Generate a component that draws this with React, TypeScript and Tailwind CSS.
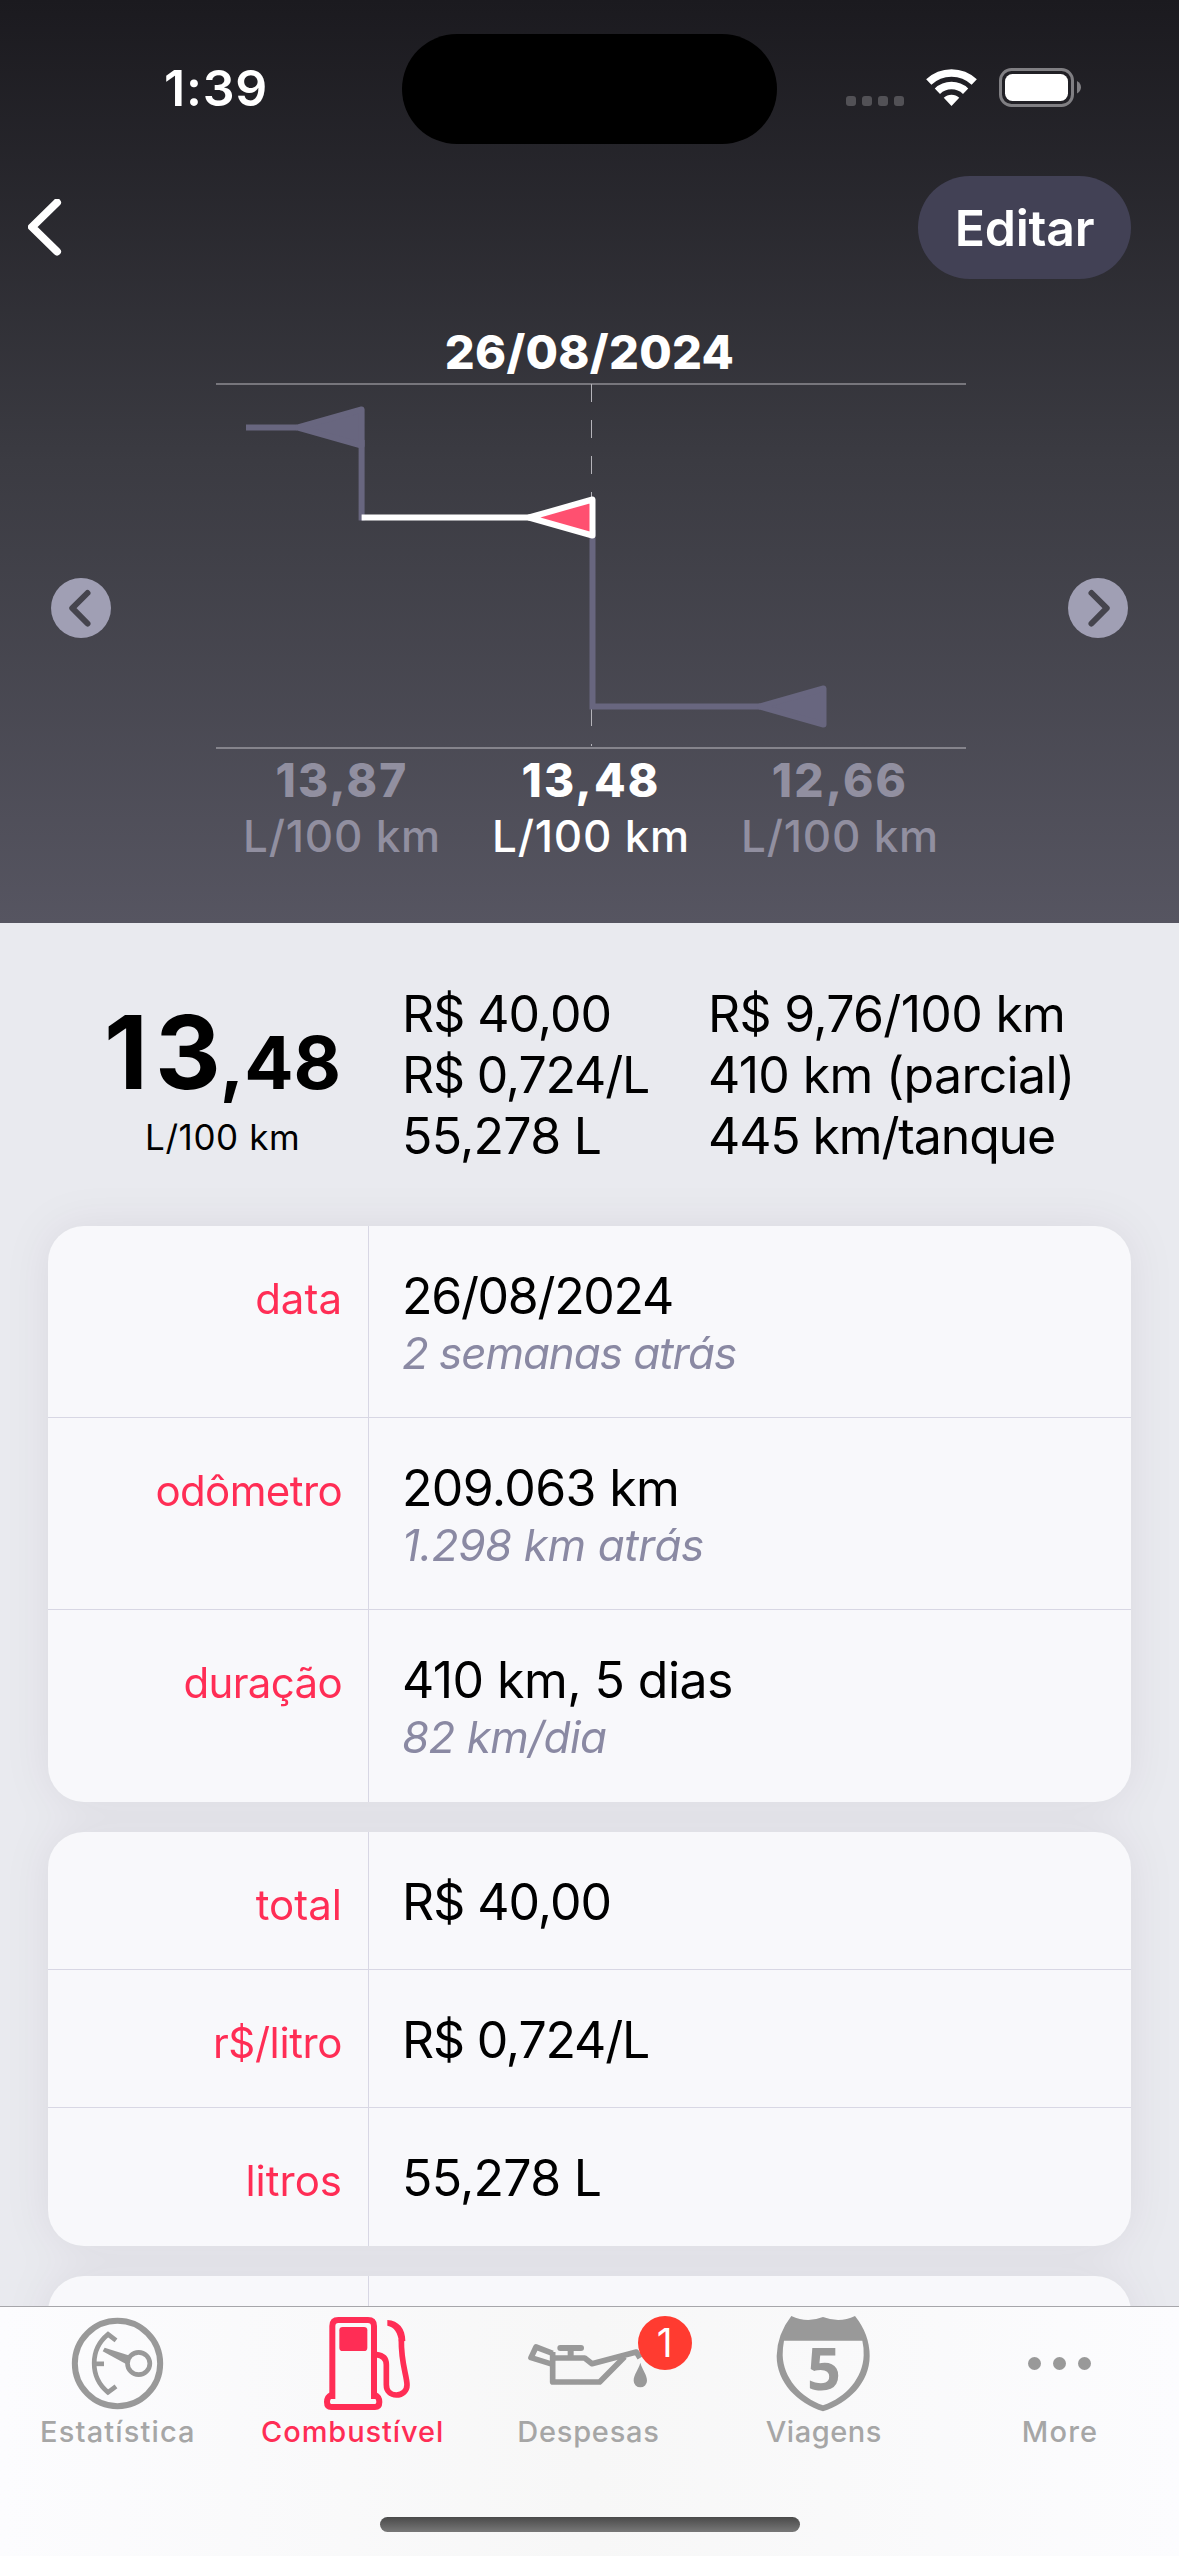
type Row = {
  label: string;
  labelClass?: string;
  value: string;
  valueClass: string;
  note?: string;
  noteClass?: string;
};

const readings = [
  { value: '13,87', tone: 'text-[#918fa0]' },
  { value: '13,48', tone: 'text-white' },
  { value: '12,66', tone: 'text-[#918fa0]' }
];

const tripRows: Row[] = [
  {
    label: 'data',
    value: '26/08/2024',
    valueClass: 'tracking-[-1.31px]',
    note: '2 semanas atrás',
    noteClass: 'tracking-[-1.07px]'
  },
  {
    label: 'odômetro',
    labelClass: 'tracking-[-0.6px]',
    value: '209.063 km',
    valueClass: 'tracking-[-0.64px]',
    note: '1.298 km atrás',
    noteClass: 'tracking-[-0.4px]'
  },
  {
    label: 'duração',
    labelClass: 'tracking-[-0.65px]',
    value: '410 km, 5 dias',
    valueClass: 'tracking-[-0.56px]',
    note: '82 km/dia',
    noteClass: 'tracking-[-0.57px]'
  }
];

const costRows: Row[] = [
  { label: 'total', value: 'R$ 40,00', valueClass: 'tracking-[-1.01px]' },
  { label: 'r$/litro', labelClass: 'tracking-[-0.4px]', value: 'R$ 0,724/L', valueClass: 'tracking-[-1.18px]' },
  { label: 'litros', value: '55,278 L', valueClass: 'tracking-[-0.75px]' }
];

function StatusBar() {
  return (
    <div className="flex h-[176px] shrink-0">
      <div className="w-[402px] pt-[63px] pl-[164px] text-[50px] leading-[50px] font-semibold tracking-[0.8px]">1:39</div>
      <div className="mt-[34px] h-[110px] w-[375px] rounded-full bg-black" />
      <div className="flex h-[39px] items-end gap-[22px] mt-[68px] pl-[69px]">
        <div className="mb-px flex gap-1.5">
          {[0, 1, 2, 3].map((i) => (
            <span key={i} className="size-2.5 rounded-[3px] bg-[#525156]" />
          ))}
        </div>
        <svg className="mb-px h-[37px] w-[51px]" viewBox="0 0 153 112" fill="none" stroke="#fff" strokeWidth="23">
          <path d="M7.700 39.500A100 100 0 0 1 145.300 39.500" />
          <path d="M33.800 67A62 62 0 0 1 119.200 67" />
          <path d="M76.500 112L53 87.300A34 34 0 0 1 100 87.300Z" fill="#fff" stroke="none" />
        </svg>
        <svg className="h-[39px] w-[82px]" viewBox="0 0 82 39">
          <rect x="1.500" y="1.500" width="72" height="36" rx="11" fill="none" stroke="#807f83" strokeWidth="3" />
          <rect x="6" y="6" width="63" height="27" rx="7.500" fill="#fff" />
          <path d="M78 13Q82 15.500 82 19.200T78 25.500Z" fill="#807f83" />
        </svg>
      </div>
    </div>
  );
}

function CircleArrow({ flip = false }: { flip?: boolean }) {
  return (
    <svg className={flip ? 'mt-[83px] size-[60px] -scale-x-100' : 'mt-[83px] size-[60px]'} viewBox="0 0 60 60">
      <circle cx="30" cy="30" r="30" fill="#a09fb4" />
      <path d="M36.500 15L21.300 30.200L36.500 45.500" fill="none" stroke="#45444d" strokeWidth="6" strokeLinecap="round" strokeLinejoin="round" />
    </svg>
  );
}

function ConsumptionChart() {
  return (
    <svg className="ml-[3px] h-[367px] w-[750px]" viewBox="216 383 750 367" fill="none">
      <path d="M216 384H966" stroke="#77767c" strokeWidth="2" />
      <path d="M216 748H966" stroke="#85848c" strokeWidth="2" />
      <path d="M591.500 384V746" stroke="#b5b4ba" strokeWidth="1" strokeDasharray="18 18" />
      <g stroke="#68667f" strokeWidth="6" strokeLinejoin="round">
        <path d="M246 427.500H297M361.600 440V520.500M592.500 530V706.500H760" strokeLinejoin="miter" />
        <path d="M298 427.500L361.600 409.500V445.500Z" fill="#68667f" />
        <path d="M760 706.500L823.500 688.500V724.500Z" fill="#68667f" />
      </g>
      <g stroke="#fff" strokeWidth="6" strokeLinejoin="round">
        <path d="M361.600 517.500H530" />
        <path d="M529 517.500L592.500 499.500V535.500Z" fill="#ff5070" />
      </g>
    </svg>
  );
}

function Header() {
  return (
    <header className="flex h-[923px] shrink-0 flex-col bg-linear-to-b from-[#1b1a1f] via-[#3b3b42] via-50% to-[#565561] text-white">
      <StatusBar />
      <div className="flex h-[103px] items-center justify-between pr-12 pl-7">
        <svg className="h-[58px] w-[34px]" viewBox="0 0 34 58" fill="none" stroke="#fff" strokeWidth="8" strokeLinecap="round" strokeLinejoin="round">
          <path d="M29 3.500L4 28L29 52.500" />
        </svg>
        <button className="h-[103px] w-[213px] rounded-full bg-[#424155] pt-0.5 text-[50px] font-semibold tracking-[-0.23px]">Editar</button>
      </div>
      <h1 className="mt-12 text-center text-[47px] leading-[50px] font-extrabold tracking-[0.3px]">26/08/2024</h1>
      <div className="mt-1.5 flex items-center justify-between px-[51px]">
        <CircleArrow />
        <ConsumptionChart />
        <CircleArrow flip />
      </div>
      <div className="mt-[5px] flex justify-center pl-[3px]">
        {readings.map((r) => (
          <div key={r.value} className={`w-[249px] text-center ${r.tone}`}>
            <div className="text-[46px] leading-[50px] font-extrabold tracking-[2.2px]">{r.value}</div>
            <div className="mt-[3px] text-[44px] leading-[56px] font-medium tracking-[0.78px]">L/100 km</div>
          </div>
        ))}
      </div>
    </header>
  );
}

function Summary() {
  return (
    <section className="flex h-[303px]">
      <div className="w-[402px] pt-[74px] pl-[104px]">
        <div className="flex h-[110px] items-baseline font-bold">
          <span className="text-[102px] leading-[110px] tracking-[7px]">13</span>
          <span className="-ml-2 text-[73px] leading-none">,48</span>
        </div>
        <div className="mt-2.5 pl-[41px] text-[35px] leading-10 tracking-[0.59px]">L/100 km</div>
      </div>
      <div className="w-[306px] pt-[61px] text-[50px] leading-[61px]">
        <p className="tracking-[-1.01px]">R$ 40,00</p>
        <p className="tracking-[-1.18px]">R$ 0,724/L</p>
        <p className="tracking-[-0.75px]">55,278 L</p>
      </div>
      <div className="pt-[61px] text-[50px] leading-[61px]">
        <p className="tracking-[-0.7px]">R$ 9,76/100 km</p>
        <p className="tracking-[-0.66px]">410 km (parcial)</p>
        <p className="tracking-[-1.14px]">445 km/tanque</p>
      </div>
    </section>
  );
}

function Card({ rows }: { rows: Row[] }) {
  return (
    <div className="overflow-hidden rounded-[36px] bg-[#f8f8fb]">
      {rows.map((row) => (
        <div
          key={row.label}
          className={`flex border-b border-[#d8d7e4] last:border-b-0 ${row.note ? 'h-48' : 'h-[138px]'}`}
        >
          <div className={`w-[321px] border-r border-[#d8d7e4] pt-[43px] pr-[26px] text-right text-[42px] leading-[60px] text-[#ff2d55] ${row.labelClass ?? ''}`}>
            {row.label}
          </div>
          <div className="pt-10 pl-[33px]">
            <div className={`text-[50px] leading-[60px] ${row.valueClass}`}>{row.value}</div>
            {row.note && (
              <div className={`mt-0.5 text-[44px] leading-[50px] text-[#8a89a3] italic ${row.noteClass ?? ''}`}>{row.note}</div>
            )}
          </div>
        </div>
      ))}
    </div>
  );
}

function GaugeIcon() {
  return (
    <svg className="size-24" viewBox="0 0 288 288" fill="none" stroke="#999" strokeWidth="14">
      <circle cx="142.500" cy="142.500" r="128" strokeWidth="18" />
      <path d="M138 73L114 55A112 112 0 0 0 114 229L138 211" />
      <path d="M68 143.500H102" />
      <circle cx="206" cy="142.500" r="33.500" />
      <path d="M104 95L180 119L168 144L98 106Z" fill="#999" stroke="none" />
    </svg>
  );
}

function PumpIcon() {
  return (
    <svg className="size-24 overflow-visible" viewBox="0 0 288 288" fill="none" stroke="#ff2d55" strokeWidth="18">
      <g transform="translate(-1 0)">
        <path d="M80 249V30Q80 12 98 12H187Q205 12 205 30V249" />
        <path d="M78 236Q64 242 64 258Q64 273 77 273H208Q221 273 221 258Q221 242 207 236" />
        <rect x="101" y="33" width="84" height="72" rx="10" fill="#ff2d55" stroke="none" />
        <path d="M212 116C232 118 242 128 242 146V206C242 226 255 237 272 237C291 237 304 224 304 207C304 178 286 145 287 70" strokeWidth="17" />
        <path d="M245 12C279 14 299 38 299 75L280 77C277 52 266 32 245 29Z" fill="#ff2d55" stroke="none" />
      </g>
    </svg>
  );
}

function OilIcon() {
  return (
    <svg className="size-24 overflow-visible" viewBox="0 0 288 288" fill="none" stroke="#999" strokeWidth="17" strokeLinejoin="round">
      <path d="M35 112L-15 93L-30 125L35 145" />
      <path d="M35 126V198H176L251 122" />
      <path d="M35 108V126H131L153 143L286 108L297 126" />
      <path d="M58 96H120" strokeWidth="18" strokeLinecap="round" />
      <path d="M89 96V126" strokeWidth="18" />
      <path d="M298 140C304 162 318 176 318 194A20 20 0 0 1 278 194C278 176 292 162 298 140Z" fill="#999" stroke="none" />
    </svg>
  );
}

function ShieldIcon() {
  return (
    <svg className="size-24 overflow-visible" viewBox="0 0 288 288">
      <path
        fill="#999"
        fillRule="evenodd"
        d="M43 0Q90 22 138 3Q188 22 234 0Q278 55 278 120C278 200 215 262 138 286C62 262 -1 200 -1 120Q0 55 43 0ZM21 74Q17 95 17 118C19 185 70 245 138 268C208 245 258 185 260 118Q261 95 256 74Z"
      />
      <text x="141" y="222" textAnchor="middle" fill="#999" fontSize="178" className="font-['Open_Sans'] font-bold">5</text>
    </svg>
  );
}

function MoreIcon() {
  return (
    <svg className="size-24" viewBox="0 0 96 96" fill="#999">
      <circle cx="21.500" cy="47.500" r="6.500" />
      <circle cx="46.500" cy="47.500" r="6.500" />
      <circle cx="71.500" cy="47.500" r="6.500" />
    </svg>
  );
}

const tabs = [
  { label: 'Estatística', tracking: 'tracking-[1.14px]', icon: <GaugeIcon /> },
  { label: 'Combustível', tracking: 'tracking-[0.91px] mr-0.5', icon: <PumpIcon />, active: true },
  { label: 'Despesas', tracking: 'tracking-[0.77px] mr-0.5', icon: <OilIcon />, badge: 1 },
  { label: 'Viagens', tracking: 'tracking-[0.54px] mr-[3px]', icon: <ShieldIcon /> },
  { label: 'More', tracking: 'tracking-[1.2px] mr-0.5', icon: <MoreIcon /> }
];

function TabBar() {
  return (
    <nav className="flex h-[250px] shrink-0 flex-col border-t border-[#a6a6aa] bg-linear-to-r from-[#fcfcfe] via-[#f7f7f7] to-[#fcfcfe] pt-[9px]">
      <div className="grid grid-cols-5">
        {tabs.map((tab) => (
          <div key={tab.label} className="relative flex flex-col items-center">
            {tab.icon}
            {tab.badge && (
              <span className="absolute top-0 left-[166px] flex size-[54px] items-center justify-center rounded-full bg-[#ff3b30] text-[39px] text-white">
                {tab.badge}
              </span>
            )}
            <span
              className={`mt-0.5 text-[29px] leading-9 font-medium ${tab.tracking} ${tab.active ? 'text-[#ff2d55]' : 'text-[#a6a6a6]'}`}
            >
              {tab.label}
            </span>
          </div>
        ))}
      </div>
      <div className="mt-[67px] h-[15px] w-[420px] self-center rounded-full bg-linear-to-b from-[#4a4a4a] to-[#787878]" />
    </nav>
  );
}

export default function App() {
  return (
    <div className="flex h-[2556px] w-[1179px] flex-col overflow-hidden bg-[#e9eaef] font-[Inter,sans-serif] text-black">
      <Header />
      <main className="min-h-0 flex-1 overflow-hidden">
        <Summary />
        <div className="mx-12 flex flex-col gap-[30px] drop-shadow-[0_0_22px_rgba(40,10,40,0.07)]">
          <Card rows={tripRows} />
          <Card rows={costRows} />
          <Card rows={[{ label: '', value: '', valueClass: '' }]} />
        </div>
      </main>
      <TabBar />
    </div>
  );
}
